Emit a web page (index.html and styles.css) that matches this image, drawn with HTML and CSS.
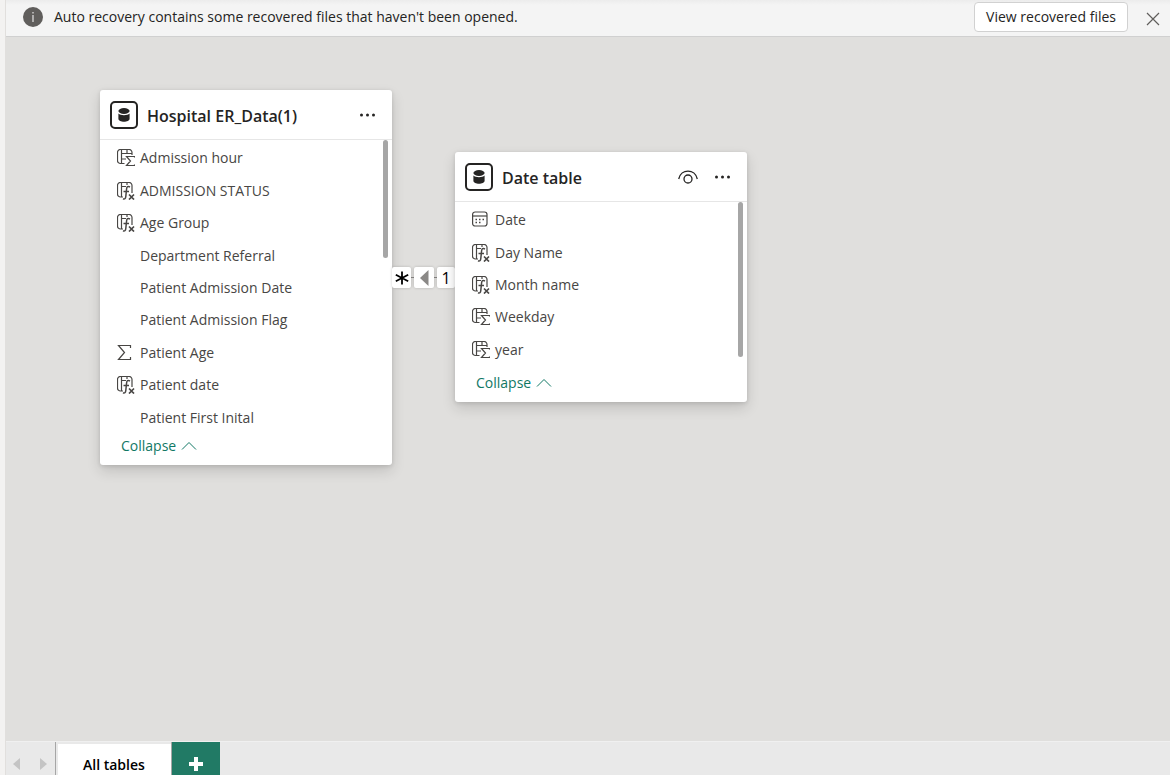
FILE: index.html
```html
<!DOCTYPE html>
<html lang="en">
<head>
<meta charset="utf-8">
<title>Model view</title>
<link rel="stylesheet" href="styles.css">
</head>
<body>
<svg class="sprite" aria-hidden="true">
  <symbol id="i-table" viewBox="0 0 28 28">
    <rect x="1" y="1" width="26" height="26" rx="4" fill="#fff" stroke="#252423" stroke-width="2"/>
    <ellipse cx="14" cy="10" rx="5.600" ry="2.900" fill="#252423"/>
    <path d="M8.400 12.600c2 2.200 9.200 2.200 11.200 0v5.200c0 4-11.200 4-11.200 0z" fill="#252423"/>
  </symbol>
  <symbol id="i-sumcol" viewBox="0 0 18 18">
    <path d="M7.500 14.500H3.500a3 3 0 0 1-3-3v-8a3 3 0 0 1 3-3H12a3 3 0 0 1 3 3V6M4.500.5v14M4.500 4.500H15M10 .5v4M4.500 10H9"/>
    <path d="M17.500 8.500V7.500H9.500l4 4.500-4 4.500h8V15.500"/>
  </symbol>
  <symbol id="i-fxcol" viewBox="0 0 18 18">
    <path d="M6 15H3.500a3 3 0 0 1-3-3V3.500a3 3 0 0 1 3-3H12a3 3 0 0 1 3 3V11M4.500.5V15M4.500 4.500H9M10 .5V3"/>
    <path d="M13 5c-2.200-1.200-3.200-.2-3.400 1.800L8.800 14.500c-.2 2.200-1.200 3-2.800 2.300M6.500 9.500H12" stroke-width="1.500"/>
    <path d="M12 12.500l5 5M17 12.500l-5 5" stroke-width="1.700"/>
  </symbol>
  <symbol id="i-sum" viewBox="0 0 18 18">
    <path d="M13.500 4V1.500h-12l6 7-6 7h12V13"/>
  </symbol>
  <symbol id="i-date" viewBox="0 0 18 18">
    <rect x=".6" y="1" width="14.400" height="14" rx="2.500"/>
    <path d="M.6 5h14.400"/>
    <path d="M7 8.500h1.500M10.500 8.500H12M3.500 11.500H5M7 11.500h1.500M3.500 8.500H5" stroke-width="1.500"/>
  </symbol>
  <symbol id="i-more" viewBox="0 0 16 4">
    <g fill="#252423"><circle cx="2" cy="2" r="1.500"/><circle cx="8" cy="2" r="1.500"/><circle cx="14" cy="2" r="1.500"/></g>
  </symbol>
  <symbol id="i-up" viewBox="0 0 16 10">
    <path d="M1 8.500l7-7 7 7" fill="none" stroke="currentColor"/>
  </symbol>
</svg>

<div class="app">
  <div class="notice">
    <svg class="info" viewBox="0 0 20 20" aria-hidden="true"><circle cx="10" cy="10" r="10" fill="#605e5c"/><path d="M10 8v7M10 5v1.500" stroke="#e4e4e4" stroke-width="1.200"/></svg>
    <span class="notice-text">Auto recovery contains some recovered files that haven't been opened.</span>
    <button class="view" type="button">View recovered files</button>
    <button class="plain close" type="button" aria-label="Close"><svg width="14" height="14" viewBox="0 0 14 14"><path d="M1 1l12 12M13 1L1 13" stroke="#605e5c" stroke-width="1.200"/></svg></button>
  </div>

  <main class="canvas">
    <section class="card hospital">
      <header class="card-head">
        <svg class="table-icon" aria-hidden="true"><use href="#i-table"/></svg>
        <h2>Hospital ER_Data(1)</h2>
        <button class="plain" type="button" aria-label="More options"><svg width="17" height="4"><use href="#i-more"/></svg></button>
      </header>
      <div class="card-body">
        <ul class="fields">
          <li><svg><use href="#i-sumcol"/></svg>Admission hour</li>
          <li><svg><use href="#i-fxcol"/></svg>ADMISSION STATUS</li>
          <li><svg><use href="#i-fxcol"/></svg>Age Group</li>
          <li><svg></svg>Department Referral</li>
          <li><svg></svg>Patient Admission Date</li>
          <li><svg></svg>Patient Admission Flag</li>
          <li><svg><use href="#i-sum"/></svg>Patient Age</li>
          <li><svg><use href="#i-fxcol"/></svg>Patient date</li>
          <li><svg></svg>Patient First Inital</li>
        </ul>
        <div class="thumb"></div>
      </div>
      <button class="plain collapse" type="button">Collapse<svg width="16" height="10"><use href="#i-up"/></svg></button>
    </section>

    <div class="relation">
      <span class="end many"><svg width="14" height="14" viewBox="0 0 14 14" role="img" aria-label="Many"><path d="M7 .5v13M.8 3.800l12.400 6.400M13.200 3.800L.8 10.200" stroke="#000" stroke-width="1.800"/></svg></span>
      <span class="end"><svg width="9" height="16" viewBox="0 0 9 16" role="img" aria-label="Filter direction"><path d="M8.500 0v16L0 8z" fill="#8a8886"/></svg></span>
      <span class="end one">1</span>
    </div>

    <section class="card dates">
      <header class="card-head">
        <svg class="table-icon" aria-hidden="true"><use href="#i-table"/></svg>
        <h2>Date table</h2>
        <button class="plain" type="button" aria-label="Hide table"><svg width="20" height="14" viewBox="0 0 20 14" fill="none" stroke="#252423" stroke-width="1.300"><path d="M.7 9C3-1.500 17-1.500 19.300 9"/><circle cx="10" cy="9" r="4"/></svg></button>
        <button class="plain" type="button" aria-label="More options"><svg width="17" height="4"><use href="#i-more"/></svg></button>
      </header>
      <div class="card-body">
        <ul class="fields">
          <li><svg><use href="#i-date"/></svg>Date</li>
          <li><svg><use href="#i-fxcol"/></svg>Day Name</li>
          <li><svg><use href="#i-fxcol"/></svg>Month name</li>
          <li><svg><use href="#i-sumcol"/></svg>Weekday</li>
          <li><svg><use href="#i-sumcol"/></svg>year</li>
        </ul>
        <div class="thumb"></div>
      </div>
      <button class="plain collapse" type="button">Collapse<svg width="16" height="10"><use href="#i-up"/></svg></button>
    </section>
  </main>

  <nav class="tabs">
    <div class="pager">
      <button class="plain" type="button" aria-label="Previous"><svg width="7" height="12" viewBox="0 0 7 12"><path d="M7 0v12L0 6z" fill="#c4c4c4"/></svg></button>
      <button class="plain" type="button" aria-label="Next"><svg width="7" height="12" viewBox="0 0 7 12"><path d="M0 0v12l7-6z" fill="#c4c4c4"/></svg></button>
    </div>
    <button class="tab" type="button">All tables</button>
    <button class="add" type="button" aria-label="New layout"><svg width="14" height="14" viewBox="0 0 14 14"><path d="M7 0v14M0 7h14" stroke="#fff" stroke-width="4"/></svg></button>
  </nav>
</div>
</body>
</html>
```
FILE: styles.css
```css
* { box-sizing: border-box; }

body {
  margin: 0;
  background: #f3f2f1;
  color: #252423;
  font: 14px/20px "Open Sans", "Noto Sans", sans-serif;
}

button { font: inherit; color: inherit; }
svg { display: block; flex: none; }
.sprite { position: absolute; width: 0; height: 0; }

.plain {
  display: flex;
  align-items: center;
  padding: 0;
  border: 0;
  background: none;
}

.app {
  display: flex;
  flex-direction: column;
  height: 100vh;
  margin-left: 5px;
  border-left: 1px solid #e1dfdd;
  overflow: hidden;
}

.notice {
  display: flex;
  align-items: center;
  height: 37px;
  padding: 0 10px 3px 17px;
  background: linear-gradient(#ececec, #f4f4f4 5px);
  border-bottom: 1px solid #d0d0d0;
}
.info { width: 20px; height: 20px; margin-right: 11px; }
.notice-text { flex: 1; }
.view {
  height: 30px;
  padding: 0 11px;
  background: #fff;
  border: 1px solid #d1d1d1;
  border-radius: 4px;
}
.close { margin: 4px 0 0 18px; }

.canvas {
  position: relative;
  flex: 1;
  background: #e0dfdd;
}

.card {
  position: absolute;
  width: 292px;
  padding-bottom: 9px;
  background: #fff;
  border-radius: 3px;
  box-shadow: 0 6px 14px rgba(0, 0, 0, .14), 0 1px 4px rgba(0, 0, 0, .12);
}
.hospital { left: 94px; top: 53px; }
.dates { left: 449px; top: 115px; }

.card-head {
  display: flex;
  align-items: center;
  gap: 16px;
  height: 50px;
  padding: 0 16px 0 10px;
  border-bottom: 1px solid #e6e6e6;
}
.table-icon { width: 28px; height: 28px; margin-right: -7px; }
.card-head h2 {
  flex: 1;
  margin: 0;
  padding-top: 2px;
  font-size: 16px;
  font-weight: 600;
  line-height: 24px;
}

.card-body { display: flex; padding-right: 4px; }
.fields {
  display: grid;
  grid-auto-rows: 1fr;
  flex: 1;
  height: 292px;
  margin: 2px 0;
  padding: 0 0 0 17px;
  list-style: none;
  color: #484644;
}
.dates .fields { height: 162px; }
.fields li { display: flex; align-items: center; gap: 5px; }
.fields svg {
  width: 18px;
  height: 18px;
  fill: none;
  stroke: #484644;
  stroke-width: 1.2;
}
.thumb {
  width: 5px;
  height: 118px;
  background: #a6a6a6;
  border-radius: 3px;
}
.dates .thumb { height: 155px; }

.collapse {
  gap: 5px;
  margin-left: 21px;
  color: #117865;
}
.dates .collapse { margin-top: 5px; }

.relation {
  position: absolute;
  left: 386px;
  top: 230px;
  display: flex;
  justify-content: space-between;
  width: 63px;
  background: linear-gradient(#8a8886, #8a8886) center / 100% 1px no-repeat;
}
.end {
  display: flex;
  align-items: center;
  justify-content: center;
  width: 20px;
  height: 21px;
  background: #fff;
  border-radius: 2px;
  box-shadow: 0 0 3px rgba(0, 0, 0, .2);
}
.many { width: 19px; }
.one { width: 18px; font-size: 16px; color: #000; }

.tabs {
  display: flex;
  height: 34px;
  background: #e9e9e9;
  border-top: 1px solid #f0f0f0;
}
.pager {
  display: flex;
  gap: 20px;
  width: 50px;
  padding: 11px 0 0 7px;
  border-right: 1px solid #a6a6a6;
}
.tab {
  margin: 2px 0 0 2px;
  padding: 10px 26px 0 25px;
  background: #fff;
  border: 0;
  font-weight: 600;
  color: #000;
}
.add {
  display: flex;
  align-items: center;
  justify-content: center;
  width: 49px;
  padding: 11px 0 0;
  background: #217a65;
  border: 0;
  border-left: 1px solid #a6a6a6;
}
```
